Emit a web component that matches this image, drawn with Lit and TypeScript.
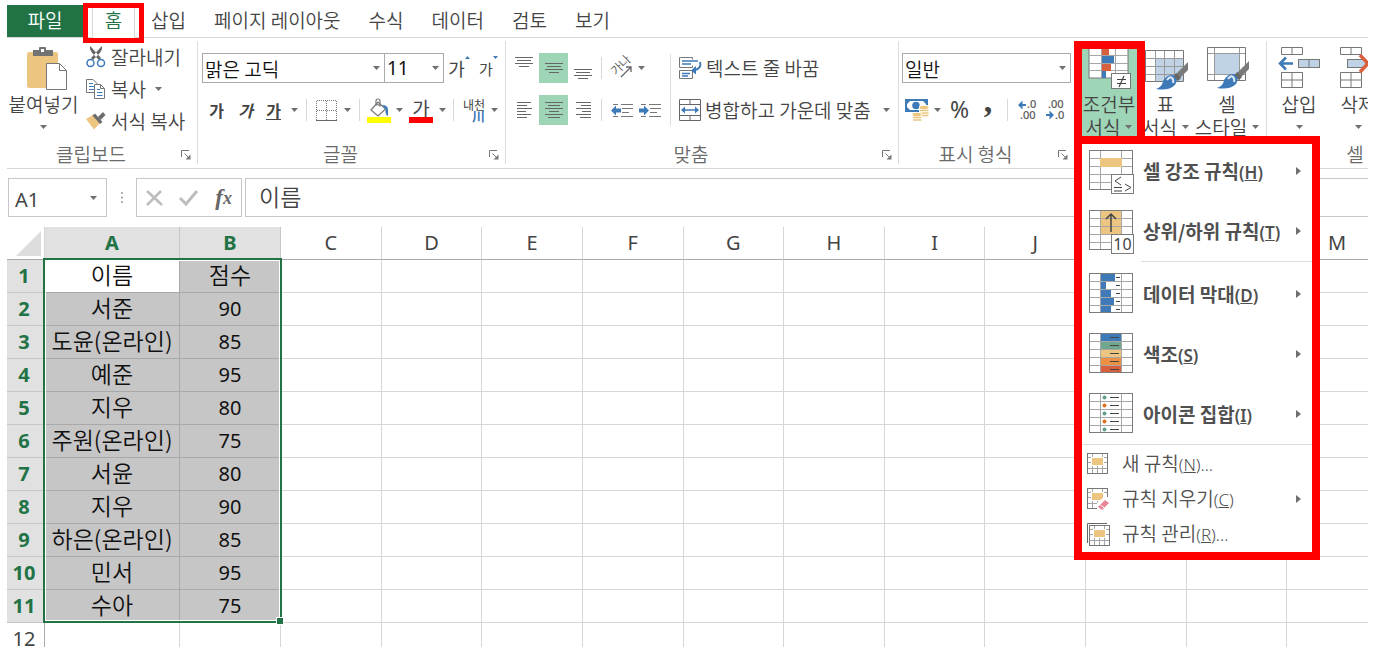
import { LitElement, html, svg, css } from "lit";
import { customElement, property, state } from "lit/decorators.js";
import { classMap } from "lit/directives/class-map.js";

const LINE = "#a6a6a6";
const BLUE = "#3f7ab8";
const PALE = "#bfd2e6";
const SAND = "#ecc680";
const RED = "#d9603f";

const icon = (w: number, h: number, body: unknown) =>
  html`<svg width=${w} height=${h} viewBox="0 0 ${w} ${h}" aria-hidden="true" fill="none">${body}</svg>`;

const caret = () => icon(7, 4, svg`<path d="M0 0H7L3.5 4Z" fill="#6f6f6f"/>`);
const sideCaret = () => icon(5, 8, svg`<path d="M0 0L5 4L0 8Z" fill="#6f6f6f"/>`);
const launcher = () =>
  icon(10, 10, svg`<path d="M.5 7V.5H8" stroke="#777"/><path d="M3.5 3.5L8 8" stroke="#777"/><path d="M9.5 4.5V9.5H4.5Z" fill="#777"/>`);

/* Stacked text lines: each entry is [start, end] on consecutive rows. */
const lines = (w: number, rows: number[][]) =>
  icon(w, rows.length * 3, rows.map(([a, b], i) => svg`<path d="M${a} ${i * 3 + 1.5}H${b}" stroke="#666"/>`));

const vertAlign = () => lines(18, [[0, 18], [2, 16], [0, 18], [4, 14]]);
const leftAlign = () => lines(15, [[0, 14], [0, 10], [0, 15], [0, 9], [0, 14], [0, 10]]);
const midAlign = () => lines(18, [[0, 18], [3, 15], [0, 18], [4, 14], [0, 18], [3, 15]]);
const rightAlign = () => lines(15, [[0, 15], [5, 15], [0, 15], [6, 15], [0, 15], [4, 15]]);

const indent = (out: boolean) =>
  icon(22, 15, svg`
    <path d="M2 1.5H7M10 1.5H22M11 5.5H22M11 9.5H18M2 13.5H7M10 13.5H22" stroke="#777"/>
    <path d=${out ? "M0 7.5L5 2.5V5.5H10V9.5H5V12.5Z" : "M10 7.5L5 2.5V5.5H0V9.5H5V12.5Z"} fill=${BLUE}/>`);

const pasteIcon = () =>
  icon(50, 46, svg`<g transform="translate(8 1)">
    <rect x="1" y="6" width="31" height="36" rx="2" fill=${SAND}/>
    <path d="M7 10V4H13V2Q13 1 14 1H19Q20 1 20 2V4H27V10Z" fill="#737373"/><rect x="15" y="3" width="3" height="3" fill="#fff"/>
    <path d="M20.500 17.500H33.500L40.500 24.500V43.500H20.500Z" fill="#fff" stroke="#777"/><path d="M33.500 17.500V24.500H40.500" stroke="#777"/></g>`);

const cutIcon = () =>
  icon(20, 22, svg`
    <path d="M4 0Q3 4 8 9L13 14L15 12L6 2ZM16 0Q17 4 12 9L7 14L5 12L14 2Z" fill="#666"/>
    <circle cx="4.500" cy="17" r="3.500" stroke=${BLUE} stroke-width="1.500"/><circle cx="15" cy="17" r="3.500" stroke=${BLUE} stroke-width="1.500"/>`);

const copyIcon = () =>
  icon(20, 20, svg`
    <path d="M.5 .5H7L11.500 5V13.500H.5Z" fill="#fff" stroke="#777"/><path d="M3 4.500H7M3 7.500H8M3 10.500H8" stroke=${BLUE}/>
    <path d="M8.500 5.500H14.500L18.500 9.500V19.500H8.500Z" fill="#fff" stroke="#777"/><path d="M14.500 5.500V9.500H18.500" stroke="#777"/>
    <path d="M11 10.500H14M11 13.500H16.500M11 16.500H16.500" stroke=${BLUE}/>`);

const brushIcon = () =>
  icon(20, 20, svg`
    <path d="M0 8L7 4L14 12L8 18.500Z" fill=${SAND}/><path d="M6.500 4.500L9 2.500L16.500 11L14 13Z" fill="#6c6c6c"/>
    <path d="M12 6L17 1L19.500 4L14.500 9Z" fill="#6c6c6c"/>`);

const borderIcon = () =>
  icon(21, 21, svg`
    <path d="M.5 20V.5H20.500V20M10.500 1V20M1 10.500H20" stroke="#777" stroke-dasharray="1 1"/><path d="M0 20.500H21" stroke="#666"/>`);

const bucketIcon = () =>
  icon(24, 25, svg`
    <path d="M4 12L11 4L18.500 11L11 18Z" stroke="#777" stroke-width="1.200" fill="#fff"/>
    <path d="M9 8V3Q9 1 11 1T13 3V8L10 6" stroke="#777" stroke-width="1.200"/>
    <path d="M15 7Q21 7 21 12V18Q18 17 18.500 11Z" fill=${BLUE}/>
    <rect y="19" width="24" height="6" fill="#ffff00"/>`);

const orientIcon = () =>
  icon(26, 26, svg`
    <text x="0" y="0" transform="translate(7 21) rotate(-45)" font-size="12" fill="#555" font-family="Noto Sans CJK KR, sans-serif">가나</text>
    <path d="M12 22L22 12M22 17V12H17" stroke="#666" stroke-width="1.300"/>`);

const wrapIcon = () =>
  icon(23, 22, svg`
    <path d="M.5 .5H13.500V2.500M.5 .5V10.500H13.500V8.500M.5 21.500V13.500H13.500V21.500Z" stroke="#777"/>
    <path d="M3 4H19M3 7H12M3 16.500H11M3 19H9" stroke=${BLUE} stroke-width="1.300"/>
    <path d="M21 5Q23 11 16 13" stroke=${BLUE} stroke-width="2"/><path d="M12 13.500L17 9V17.500Z" fill=${BLUE}/>`);

const mergeIcon = () =>
  icon(22, 22, svg`
    <path d="M.5 .5H21.500V21.500H.5ZM.5 5.500H21.500M.5 16.500H21.500M11 1V5M11 17V21" stroke="#666"/>
    <path d="M4 11H18" stroke=${BLUE} stroke-width="1.500"/><path d="M2 11L6 7.500V14.500ZM20 11L16 7.500V14.500Z" fill=${BLUE}/>`);

const moneyIcon = () =>
  icon(24, 22, svg`
    <rect width="23" height="13" fill=${BLUE}/><rect x="2" y="2" width="19" height="9" fill="#fff"/><path d="M2 2H5L2 5ZM21 2H18L21 5ZM2 11H5L2 8Z" fill=${BLUE}/>
    <circle cx="11" cy="6.500" r="3.800" fill=${BLUE}/>
    <rect x="14" y="6" width="10" height="13" rx="2" fill="#fff"/>
    <ellipse cx="19" cy="8.500" rx="4.500" ry="1.800" fill=${SAND}/><path d="M15 11.500H23.500M15 14H23.500M15 16.500H23.500" stroke=${SAND} stroke-width="1.600"/>
    <rect x="7" y="13" width="10" height="9" rx="2" fill="#fff"/><ellipse cx="12" cy="15.500" rx="4.500" ry="1.800" fill=${SAND}/><path d="M8 18.500H16.500M8 21H16.500" stroke=${SAND} stroke-width="1.600"/>`);

const decimalIcon = (more: boolean) =>
  icon(20, 22, svg`
    <text x=${more ? 9 : 2} y="9" font-size="11" font-weight="400" fill="#555" stroke="#555" stroke-width=".2" font-family="Noto Sans, sans-serif">${more ? ".0" : ".00"}</text>
    <text x=${more ? 2 : 9} y="20" font-size="11" font-weight="400" fill="#555" stroke="#555" stroke-width=".2" font-family="Noto Sans, sans-serif">${more ? ".00" : ".0"}</text>
    <path d=${more ? "M0 6L4.500 1.500V5H8V7H4.500V10.500Z" : "M8 16L3.500 11.500V15H0V17H3.500V20.500Z"} fill=${BLUE}/>`);

const brush = () => svg`
  <path d="M43 15V23L35 31L31 27Z" fill="#7a7a7a"/><path d="M31 26L36 31L33 34L28 30Z" fill="#666"/>
  <path d="M28 28Q34 32 30 38Q24 44 11 42Q18 39 18 34Q22 27 28 28Z" fill=${BLUE}/><path d="M22 33Q25 29 27 31T28 36" stroke="#dce8f4" stroke-width="2"/>`;

const condIcon = () =>
  icon(44, 44, svg`<g transform="translate(1 1)">
    <rect x="1" y="1" width="39" height="30" fill="#fff" stroke="#777"/>
    <path d="M1 8.500H40M1 16.500H40M1 23.500H40M13.500 1V31M27.500 1V31" stroke=${LINE}/>
    <rect x="14" y="1" width="7" height="7" fill=${RED}/><rect x="14" y="9" width="12" height="7" fill=${BLUE}/>
    <rect x="14" y="17" width="9" height="7" fill=${RED}/><rect x="14" y="24" width="4" height="7" fill=${BLUE}/>
    <rect x="23.500" y="26.500" width="19" height="15" fill="#fff" stroke="#777"/><path d="M29 32.500H38M29 36.500H38M36 29L31 40" stroke="#444" stroke-width="1.200"/></g>`);

const tableIcon = () =>
  icon(44, 44, svg`<g transform="translate(1 1)">
    <path d="M.5 3.500H38.500V34.500H.5Z" fill="#fff" stroke="#777"/><rect x="10" y="11" width="28" height="23" fill=${PALE}/>
    <path d="M.5 11.500H38.500M.5 19.500H38.500M.5 27.500H38.500M10.500 4V34M19.500 4V34M29.500 4V34" stroke="#999"/>${brush()}</g>`);

const styleIcon = () =>
  icon(44, 44, svg`<g transform="translate(1 0)">
    <path d="M1.500 1.500H39.500V34.500H1.500Z" fill="#fff" stroke="#777"/><path d="M8.500 2V34M33.500 2V34M2 7.500H39M2 28.500H39" stroke="#999"/>
    <rect x="9" y="8" width="24" height="20" fill=${PALE}/>${brush()}</g>`);

const cellsIcon = (insert: boolean) =>
  icon(44, 44, svg`
    <path d="M4.500 1.500H25.500V8.500H4.500ZM15 1V9M4.500 26.500H25.500V41.500H4.500ZM15 26V42M4 34H26" stroke="#777" fill="#fff"/>
    ${insert
      ? svg`<rect x="21.500" y="13.500" width="21" height="8" fill=${PALE} stroke="#777"/><path d="M32 14V21" stroke="#777"/><path d="M3 17.500H16M9 11.500L3 17.500L9 23.500" stroke=${BLUE} stroke-width="2.500"/>`
      : svg`<rect x="11.500" y="13.500" width="18" height="8" fill=${PALE} stroke="#777"/><path d="M24 9L32 17.500L24 26" stroke=${RED} stroke-width="3.500"/><path d="M42 9L33 17.500L42 26" stroke=${RED} stroke-width="3.500"/>`}`);

/* A 44x40 sheet with three columns and five rows; content sits in the middle column. */
const sheet = (mid: unknown, badge: unknown = "") =>
  icon(46, 46, svg`<g transform="translate(0 2)">
    <rect x=".5" y=".5" width="43" height="39" fill="#fff"/>
    <path d="M1 8.500H43M1 16.500H43M1 24.500H43M1 32.500H43M11.500 1V39M32.500 1V39" stroke=${LINE}/>${mid}
    <rect x=".5" y=".5" width="43" height="39" stroke="#7c7c7c"/>${badge}</g>`);

const badgeBox = svg`<rect x="22.500" y="24.500" width="22" height="19" fill="#fff" stroke="#7c7c7c"/>`;
const rows = [0, 1, 2, 3, 4];

const ruleIcons: Record<string, () => unknown> = {
  highlight: () => sheet(svg`<path d="M12 1H32V8H12ZM12 17H32V24H12Z" fill="#fff"/><rect x="11" y="8" width="22" height="9" fill=${SAND}/>`,
    svg`${badgeBox}<path d="M32 27L26 31L32 35M25 37.500H33M25 41H33M36 34L42 37.500L36 41" stroke="#444"/>`),
  top: () => sheet(svg`<rect x="12" y="1" width="20" height="23" fill=${SAND}/><path d="M12 8.500H32M12 16.500H32" stroke=${LINE}/><path d="M22 22V4M17 9L22 4L27 9" stroke="#444" stroke-width="1.500"/>`,
    svg`${badgeBox}<text x="33.500" y="40" text-anchor="middle" font-size="16" font-weight="400" fill="#444" font-family="Noto Sans, sans-serif">10</text>`),
  bars: () => sheet(rows.map((i) => svg`<rect x="12" y=${i * 8 + 1} width="20" height="7" fill="#fff"/><rect x="12" y=${i * 8 + 1} width=${[14, 5, 10, 13, 10][i]} height="7" fill=${BLUE}/><path d="M27 ${i * 8 + 4.5}H31" stroke="#444"/>`)),
  scale: () => sheet(rows.map((i) => svg`<rect x="12" y=${i * 8 + 1} width="20" height="7" fill=${[BLUE, "#72a78f", SAND, "#eb9044", RED][i]}/><path d="M21 ${i * 8 + 4.5}H30" stroke="#444"/>`)),
  icons: () => sheet(rows.map((i) => svg`<circle cx="15.500" cy=${i * 8 + 4.5} r="2" fill=${i % 2 ? "#e0701e" : "#63a088"}/><path d="M21 ${i * 8 + 4.5}H30" stroke="#444"/>`)),
};

const smallSheet = (kind: string) =>
  icon(22, 22, svg`
    ${kind === "manage" ? svg`<path d="M.5 20V.5H20" stroke="#666"/>` : ""}
    <g transform=${kind === "manage" ? "translate(2 2)" : "translate(0 0)"}>
      <rect x=".5" y=".5" width="20" height="20" fill="#fff" stroke="#777"/>
      <path d="M1 4.500H20M1 9.500H20M1 15.500H20M5.500 1V20M10.500 12V20M15.500 1V20" stroke=${LINE}/><rect x="4" y="4" width="13" height="9" fill="#fff"/><rect x="5" y="5" width="11" height="7" fill=${SAND}/>
    </g>
    ${kind === "clear" ? svg`<path d="M10 22V15L17 9H22V22Z" fill="#fff"/><path d="M11 19L18 12L22 15L15 22Z" fill="#e88699"/><path d="M13.500 17L17.500 20" stroke="#fff"/>` : ""}`);

const bigRules = [
  [{ kind: "highlight", label: "셀 강조 규칙", key: "H" }, { kind: "top", label: "상위/하위 규칙", key: "T" }],
  [{ kind: "bars", label: "데이터 막대", key: "D" }, { kind: "scale", label: "색조", key: "S" }, { kind: "icons", label: "아이콘 집합", key: "I" }],
];
const smallRules = [
  { kind: "new", label: "새 규칙", key: "N", tail: "..." },
  { kind: "clear", label: "규칙 지우기", key: "C", tail: "", sub: true },
  { kind: "manage", label: "규칙 관리", key: "R", tail: "..." },
];

const base = css`
  * { box-sizing: border-box; }
  button, select, input { font: inherit; color: inherit; margin: 0; padding: 0; border: 0; background: none; border-radius: 0; }
  button { display: flex; align-items: center; justify-content: center; white-space: nowrap; line-height: 23px; }
  svg { display: block; flex: none; overflow: visible; }
`;

@customElement("rule-menu")
export class RuleMenu extends LitElement {
  static styles = [base, css`
    :host { display: block; background: #fff; color: #505050; }
    .group { display: grid; gap: 6px; }
    .big { width: 100%; height: 54px; padding: 0 11px 0 7px; gap: 8px; font-weight: 700; }
    .small { width: 100%; height: 35px; padding: 0 11px 0 5px; gap: 13px; }
    .text { flex: 1; text-align: left; }
    .key { font-size: 17px; font-family: "Noto Sans", sans-serif; font-weight: 600; }
    .small .key { font-weight: inherit; }
    hr { border: 0; height: 1px; background: #dedede; margin: 3px 0 1px; }
    .inset { margin: 3px 0 5px 59px; }
  `];

  render() {
    return html`
      <div class="group">${bigRules[0].map((r) => this.big(r))}</div>
      <hr class="inset" />
      <div class="group">${bigRules[1].map((r) => this.big(r))}</div>
      <hr />
      ${smallRules.map((r) => html`
        <button class="small" role="menuitem">${smallSheet(r.kind)}
          <span class="text">${r.label}<span class="key">(<u>${r.key}</u>)${r.tail}</span></span>${r.sub ? sideCaret() : ""}
        </button>`)}`;
  }

  private big(r: { kind: string; label: string; key: string }) {
    return html`<button class="big" role="menuitem">${ruleIcons[r.kind]()}
      <span class="text">${r.label}<span class="key">(<u>${r.key}</u>)</span></span>${sideCaret()}</button>`;
  }
}

@customElement("ribbon-group")
export class RibbonGroup extends LitElement {
  @property() label = "";
  @property({ type: Boolean }) plain = false;

  static styles = [base, css`
    :host { display: flex; flex-direction: column; flex: none; padding: 3px 0 4px; }
    .frame { flex: 1; border-right: 1px solid #dcdcdc; display: flex; flex-direction: column; }
    .body { height: 96px; display: flex; }
    .foot { display: grid; grid-template-columns: 1fr 22px; align-items: center; height: 27px; padding-top: 6px; color: #6a6a6a; }
    .plain { grid-template-columns: 1fr; }
    .label { text-align: center; line-height: 21px; }
    .launch { height: 20px; padding-top: 2px; }
  `];

  render() {
    return html`<div class="frame">
      <div class="body"><slot></slot></div>
      <div class=${classMap({ foot: true, plain: this.plain })}>
        <span class="label">${this.label}</span>
        ${this.plain ? "" : html`<button class="launch" aria-label="${this.label} 옵션">${launcher()}</button>`}
      </div>
    </div>`;
  }
}

@customElement("sheet-grid")
export class SheetGrid extends LitElement {
  @property({ attribute: false }) data: [string, string][] = [];

  static styles = [base, css`
    :host { display: block; overflow: hidden; }
    .wrap { position: relative; margin-right: -20px; }
    table { width: 100%; table-layout: fixed; border-collapse: separate; border-spacing: 0; }
    .c-head { width: 38px; } .c-a { width: 135px; } .c-b { width: 101px; }
    th, td { padding: 0; height: 33px; text-align: center; border-right: 1px solid #d6d6d6; border-bottom: 1px solid #d6d6d6; white-space: nowrap; }
    td { padding-bottom: 4px; line-height: 28px; font-size: 23px; color: #111; }
    th { font: 400 20px/30px "Noto Sans", sans-serif; color: #444; }
    thead th { border-bottom-color: #ababab; }
    tbody th { border-right-color: #ababab; padding-right: 3px; }
    .corner { border-right-color: #d6d6d6; }
    .corner svg { margin-left: 9px; }
    .on { background: #e1e1e1; color: #217346; font-weight: 700; border-color: #c6c6c6; }
    .sel { background: #c6c6c6; border-color: #a9a9a9; }
    .active { background: #fff; }
    .num { font: 400 20px/30px "Noto Sans", sans-serif; padding-bottom: 0; }
    .range { position: absolute; left: 36px; top: 31px; width: 239px; height: 365px; border: 2px solid #217346; box-shadow: inset 0 0 0 1px #fff; pointer-events: none; }
    .handle { position: absolute; right: -3px; bottom: -3px; width: 6px; height: 6px; background: #217346; outline: 1px solid #fff; }
  `];

  render() {
    const letters = "ABCDEFGHIJKLM".split("");
    const count = this.data.length;
    return html`<div class="wrap">
      <table>
        <colgroup><col class="c-head" /><col class="c-a" /><col class="c-b" />${letters.slice(2).map(() => html`<col />`)}</colgroup>
        <thead><tr>
          <th class="corner">${icon(26, 25, svg`<path d="M25 0V25H0Z" fill="#dcdcdc"/>`)}</th>
          ${letters.map((l, i) => html`<th scope="col" class=${classMap({ on: i < 2 })}>${l}</th>`)}
        </tr></thead>
        <tbody>${[...this.data, ["", ""]].map((row, r) => html`<tr>
          <th scope="row" class=${classMap({ on: r < count })}>${r + 1}</th>
          ${letters.map((_, c) => html`<td class=${classMap({ sel: r < count && c < 2, active: r === 0 && c === 0, num: r > 0 && c === 1 })}>${row[c] ?? ""}</td>`)}
        </tr>`)}</tbody>
      </table>
      <div class="range"><span class="handle"></span></div>
    </div>`;
  }
}

@customElement("app-root")
export class AppRoot extends LitElement {
  @state() private scores: [string, string][] = [
    ["이름", "점수"], ["서준", "90"], ["도윤(온라인)", "85"], ["예준", "95"], ["지우", "80"], ["주원(온라인)", "75"],
    ["서윤", "80"], ["지우", "90"], ["하은(온라인)", "85"], ["민서", "95"], ["수아", "75"],
  ];

  static styles = [base, css`
    :host { display: block; box-sizing: border-box; height: 100vh; padding: 0 12px 3px 7px; background: #fff; color: #444;
      font-family: "Noto Sans CJK KR", "Noto Sans", sans-serif; font-size: 19px; font-weight: 350; line-height: 23px; }
    .shell { height: 100%; overflow: hidden; }

    .tabs { display: flex; height: 38px; padding-top: 5px; border-bottom: 1px solid #d8d8d8; }
    .tab { margin-left: 28px; padding-bottom: 4px; }
    .file { width: 76px; background: #217346; color: #fff; padding-bottom: 4px; }
    .home { position: relative; width: 61px; padding: 0 9px; }
    .home-tab { width: 100%; height: 33px; padding-bottom: 4px; background: #fff; color: #217346; border: 1px solid #d8d8d8; border-width: 0 1px; }
    .ring { position: absolute; border: 5px solid #f00; pointer-events: none; z-index: 2; }
    .home .ring { inset: -2px 0 -6px; }
    .home + .tab { margin-left: 7px; }

    .ribbon { display: flex; border-bottom: 1px solid #d6d6d6; height: 131px; }
    .g-clip { width: 191px; } .g-font { width: 308px; } .g-align { width: 393px; }
    .g-num { width: 176px; } .g-style { width: 192px; } .g-cells { width: 177px; }

    .tall { display: grid; justify-items: center; align-content: start; grid-template-rows: 48px 23px 23px; padding-top: 3px; height: 96px; width: 100%; }
    .tall svg { align-self: center; }
    .row { display: flex; align-items: center; gap: 5px; }
    .paste { width: 73px; flex: none; }
    .clip-list { display: grid; grid-template-rows: repeat(3, 32px); justify-items: start; padding-left: 6px; }
    .clip-list button { gap: 5px; padding-bottom: 1px; }
    .clip-list .gap { margin-left: 4px; }

    .stack { display: grid; gap: 12px; padding-top: 12px; grid-auto-rows: 30px; }
    .tools { display: grid; align-items: center; justify-items: center; }
    .tools button { height: 30px; width: 100%; }
    .f1 { grid-template-columns: 183px 59px 30px 29px; }
    .f2 { grid-template-columns: 29px 29px 27px 14px 10px 30px 12px 12px 27px 14px 30px 12px 10px 32px 9px; }
    .a-grid { grid-template-columns: 30px 29px 30px 7px 33px 24px; }
    .n2 { grid-template-columns: 30px 11px 33px 24px 14px 27px 30px; }
    .pad { padding-left: 4px; }
    .pad-sm { padding-left: 3px; }
    .sep { width: 1px; height: 22px; background: #d9d9d9; }
    .long { width: 1px; height: 72px; background: #dedede; margin: 13px 8px 0 8px; }
    .pressed { background: #9fd5b7; }
    .high { align-items: flex-start; padding-top: 3px; }
    .low { align-items: flex-end; padding-bottom: 3px; }
    .tools .left { justify-self: start; width: 7px; }

    .pick { display: grid; width: 100%; align-items: center; }
    .pick > * { grid-area: 1 / 1; }
    .pick select { appearance: none; width: 100%; height: 30px; border: 1px solid #ababab; background: #fff; padding: 0 2px; color: #111; }
    .pick svg { justify-self: end; margin-right: 5px; pointer-events: none; }
    .join select { border-left: 0; }
    .pick .size { font: 400 19px "Noto Sans", sans-serif; }

    .glyph { font-size: 16px; font-weight: 700; }
    .slant { font-style: italic; }
    .under { border-bottom: 1px solid #444; line-height: 18px; }
    .grow { font-size: 18px; font-weight: 400; }
    .shrink { font-size: 15px; font-weight: 400; }
    .tick { align-self: flex-start; margin-top: 3px; }
    .ink { display: grid; justify-items: center; font-size: 19px; font-weight: 400; line-height: 19px; }
    .bar { width: 24px; height: 6px; background: #f00; }
    .ruby { display: grid; font-size: 12px; font-weight: 400; line-height: 11px; justify-items: end; }
    .ruby b { color: #3f7ab8; font-size: 13px; line-height: 12px; font-weight: 700; }
    .percent { font: 400 23px/30px "Noto Sans", sans-serif; padding-bottom: 2px; }
    .comma { font: 700 34px/10px "Liberation Serif", serif; padding-bottom: 18px; }
    .wide { gap: 4px; justify-content: flex-start; padding-bottom: 1px; }
    .wide .last { margin-left: 8px; }

    .style-row { display: grid; grid-template-columns: 68px 45px 78px; }
    .cell-row { display: grid; grid-template-columns: 64px 54px; }
    .cond { position: relative; }
    .cond .ring { border-width: 8px; inset: 0 -2px -7px -1px; }
    .menu { position: absolute; top: 95px; left: -1px; width: 246px; padding-bottom: 1px; border: 8px solid #f00; z-index: 3; }

    .formula { display: flex; height: 39px; margin: 9px 0 10px 1px; }
    .name { width: 99px; display: grid; align-items: center; border: 1px solid #c6c6c6; }
    .name > * { grid-area: 1 / 1; }
    .name svg { justify-self: end; margin-right: 9px; }
    .name input { width: 100%; padding: 4px 0 0 6px; font: 400 20px/30px "Noto Sans", sans-serif; }
    .dots { width: 29px; display: grid; place-items: center; }
    .fx { width: 106px; display: grid; grid-template-columns: repeat(3, 1fr); border: 1px solid #c6c6c6; margin-right: 3px; }
    .fn { font: italic 700 23px/26px "Liberation Serif", serif; color: #666; }
    .fn small { font-size: 18px; }
    .value { flex: 1; border: 1px solid #c6c6c6; border-right: 0; min-width: 0; }
    .value input { width: 100%; height: 100%; padding: 0 0 4px 13px; font-size: 23px; }
    input:focus, select:focus { outline: none; }
  `];

  private drop(label: string) {
    return html`<button aria-label=${label}>${caret()}</button>`;
  }

  render() {
    return html`<div class="shell">
      <nav class="tabs" aria-label="리본 탭">
        <button class="file">파일</button>
        <div class="home"><button class="home-tab">홈</button><span class="ring"></span></div>
        ${["삽입", "페이지 레이아웃", "수식", "데이터", "검토", "보기"].map((t) => html`<button class="tab">${t}</button>`)}
      </nav>
      <div class="ribbon">${this.clipboard()}${this.font()}${this.align()}${this.number()}${this.styleGroup()}${this.cells()}</div>
      <div class="formula">
        <div class="name"><input aria-label="이름 상자" value="A1" />${caret()}</div>
        <div class="dots">${icon(2, 11, svg`<path d="M0 1H2M0 5.500H2M0 10H2" stroke="#999" stroke-width="1.500"/>`)}</div>
        <div class="fx">
          <button aria-label="취소">${icon(17, 16, svg`<path d="M1 1L16 15M15 1L1 15" stroke="#bdbdbd" stroke-width="2.500"/>`)}</button>
          <button aria-label="입력">${icon(19, 16, svg`<path d="M1 8L7 14L18 1" stroke="#bdbdbd" stroke-width="3"/>`)}</button>
          <button class="fn" aria-label="함수 삽입">f<small>x</small></button>
        </div>
        <div class="value"><input aria-label="수식 입력줄" value="이름" /></div>
      </div>
      <sheet-grid .data=${this.scores}></sheet-grid>
    </div>`;
  }

  private clipboard() {
    return html`<ribbon-group class="g-clip" label="클립보드">
      <div class="paste"><button class="tall">${pasteIcon()}<span>붙여넣기</span>${caret()}</button></div>
      <div class="clip-list">
        <button>${cutIcon()}잘라내기</button>
        <button>${copyIcon()}복사<span class="gap">${caret()}</span></button>
        <button>${brushIcon()}서식 복사</button>
      </div>
    </ribbon-group>`;
  }

  private font() {
    const tick = (up: boolean) => html`<span class="tick">${icon(5, 3, svg`<path d=${up ? "M0 3H5L2.500 0Z" : "M0 0H5L2.500 3Z"} fill=${BLUE}/>`)}</span>`;
    return html`<ribbon-group class="g-font" label="글꼴">
      <div class="stack pad">
        <div class="tools f1">
          <div class="pick"><select aria-label="글꼴"><option>맑은 고딕</option></select>${caret()}</div>
          <div class="pick join"><select class="size" aria-label="글꼴 크기"><option>11</option></select>${caret()}</div>
          <button class="grow" aria-label="글꼴 크게">가${tick(true)}</button>
          <button class="shrink" aria-label="글꼴 작게">가${tick(false)}</button>
        </div>
        <div class="tools f2">
          <button class="glyph">가</button>
          <button class="glyph slant">가</button>
          <button class="glyph"><span class="under">가</span></button>
          ${this.drop("밑줄")}<span class="sep"></span>
          <button aria-label="테두리">${borderIcon()}</button>${this.drop("테두리 선택")}<span class="sep"></span>
          <button aria-label="채우기 색">${bucketIcon()}</button>${this.drop("채우기 색 선택")}
          <button><span class="ink">가<span class="bar"></span></span></button>${this.drop("글꼴 색 선택")}<span class="sep"></span>
          <button><span class="ruby">내천<b>川</b></span></button>${this.drop("윗주")}
        </div>
      </div>
    </ribbon-group>`;
  }

  private align() {
    return html`<ribbon-group class="g-align" label="맞춤">
      <div class="stack pad-sm">
        <div class="tools a-grid">
          <button class="high" aria-label="위쪽 맞춤">${vertAlign()}</button>
          <button class="pressed" aria-label="가운데 맞춤">${vertAlign()}</button>
          <button class="low" aria-label="아래쪽 맞춤">${vertAlign()}</button>
          <span class="sep"></span>
          <button aria-label="방향">${orientIcon()}</button><button class="left" aria-label="방향 선택">${caret()}</button>
        </div>
        <div class="tools a-grid">
          <button aria-label="왼쪽 맞춤">${leftAlign()}</button>
          <button class="pressed" aria-label="가로 가운데 맞춤">${midAlign()}</button>
          <button aria-label="오른쪽 맞춤">${rightAlign()}</button>
          <span class="sep"></span>
          <button aria-label="내어쓰기">${indent(true)}</button>
          <button aria-label="들여쓰기">${indent(false)}</button>
        </div>
      </div>
      <span class="long"></span>
      <div class="stack">
        <button class="wide">${wrapIcon()}텍스트 줄 바꿈</button>
        <button class="wide">${mergeIcon()}병합하고 가운데 맞춤<span class="last">${caret()}</span></button>
      </div>
    </ribbon-group>`;
  }

  private number() {
    return html`<ribbon-group class="g-num" label="표시 형식">
      <div class="stack pad-sm">
        <div class="pick"><select aria-label="표시 형식"><option>일반</option></select>${caret()}</div>
        <div class="tools n2">
          <button aria-label="회계 표시 형식">${moneyIcon()}</button>${this.drop("통화 선택")}
          <button class="percent">%</button>
          <button class="comma">,</button>
          <span class="sep"></span>
          <button aria-label="자릿수 늘림">${decimalIcon(true)}</button>
          <button aria-label="자릿수 줄임">${decimalIcon(false)}</button>
        </div>
      </div>
    </ribbon-group>`;
  }

  private styleGroup() {
    return html`<ribbon-group class="g-style" label="" plain>
      <div class="style-row">
        <div class="cond">
          <button class="tall pressed" aria-expanded="true">${condIcon()}<span>조건부</span><span class="row">서식${caret()}</span></button>
          <span class="ring"></span>
          <rule-menu class="menu" role="menu"></rule-menu>
        </div>
        <button class="tall">${tableIcon()}<span>표</span><span class="row">서식${caret()}</span></button>
        <button class="tall">${styleIcon()}<span>셀</span><span class="row">스타일${caret()}</span></button>
      </div>
    </ribbon-group>`;
  }

  private cells() {
    return html`<ribbon-group class="g-cells" label="셀" plain>
      <div class="cell-row">
        <button class="tall">${cellsIcon(true)}<span>삽입</span>${caret()}</button>
        <button class="tall">${cellsIcon(false)}<span>삭제</span>${caret()}</button>
      </div>
    </ribbon-group>`;
  }
}
